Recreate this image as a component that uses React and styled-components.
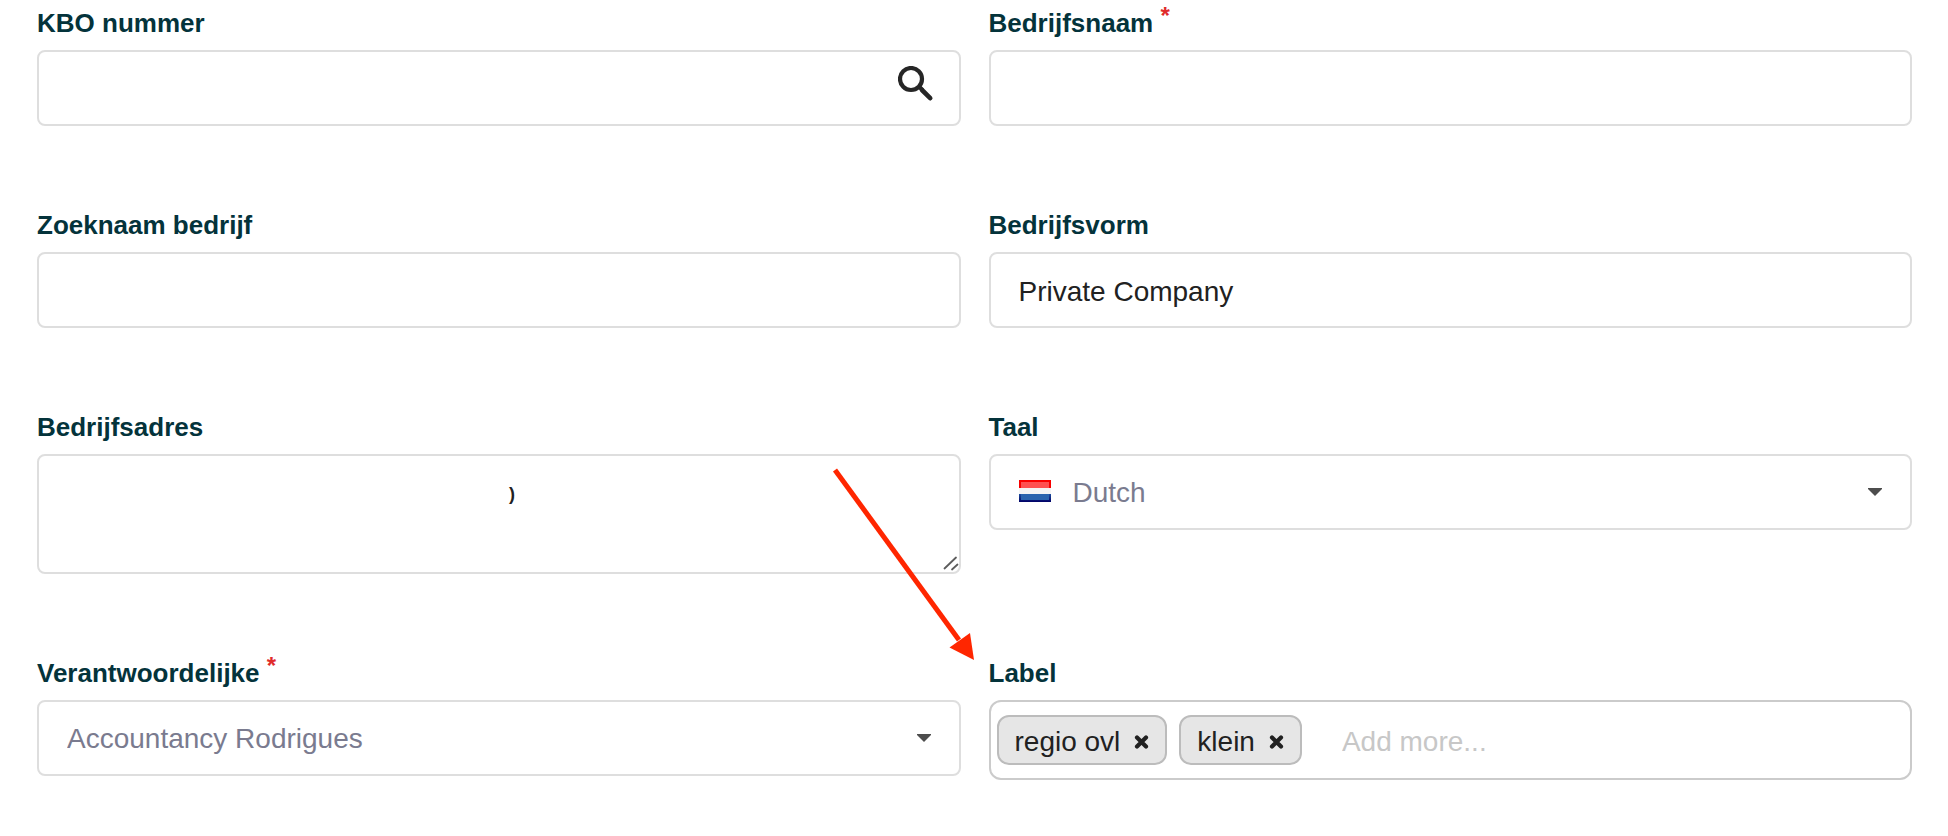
import React, { useState } from 'react'
import styled, { createGlobalStyle } from 'styled-components'

const GlobalStyle = createGlobalStyle`
  * {
    box-sizing: border-box;
  }
  body {
    margin: 0;
    background: #fff;
    color: #212121;
    font-family: "Liberation Sans", Arial, sans-serif;
  }
`;
const Form = styled.form`
  display: grid;
  grid-template-columns: 1fr 1fr;
  align-items: start;
  gap: 84px 28px;
  padding: 8px 36px 56px 37px;
`;
const Field = styled.div`
  position: relative;
  display: flex;
  flex-direction: column;
  gap: 12px;
`;
const Label = styled.label`
  font-size: 26px;
  font-weight: 700;
  line-height: 30px;
  color: #04333b;
`;
const Required = styled.sup`
  font-size: 24px;
  line-height: 0;
  vertical-align: 8px;
  color: #e02b2b;
`;
const Control = styled.div`
  position: relative;
  display: flex;
  align-items: center;
  min-height: 76px;
  border: 2px solid #dedede;
  border-radius: 8px;
  background: #fff;
`;
const Input = styled.input`
  flex: 1;
  min-width: 0;
  height: 72px;
  padding: 4px 28px 0;
  border: none;
  outline: none;
  background: transparent;
  font: 28px "Liberation Sans", Arial, sans-serif;
  color: #212121;
`;
const SearchButton = styled.button`
  display: flex;
  margin: 0 25px 8px 0;
  padding: 0;
  border: none;
  background: none;
  color: #262626;
  cursor: pointer;
`;
const TextArea = styled.textarea`
  display: block;
  width: 100%;
  height: 116px;
  padding: 28px 28px 0;
  border: none;
  outline: none;
  resize: none;
  background: transparent;
  font: bold 18px "Liberation Sans", Arial, sans-serif;
  color: #212121;
  text-indent: 442px;
`;
const Grip = styled.svg`
  position: absolute;
  right: 0;
  bottom: 0;
  pointer-events: none;
`;
const Select = styled.select`
  flex: 1;
  min-width: 0;
  height: 72px;
  padding: 0 60px 0 ${(props) => (props.$withFlag ? '22px' : '28px')};
  border: none;
  outline: none;
  appearance: none;
  background: transparent;
  font: 28px "Liberation Sans", Arial, sans-serif;
  color: #7a7b8f;
`;
const Caret = styled.svg`
  position: absolute;
  right: 27px;
  pointer-events: none;
`;
const Flag = styled.svg`
  flex: none;
  margin: 0 0 2px 28px;
`;
const TagBox = styled(Control)`
  gap: 12px;
  min-height: 80px;
  padding: 0 6px;
  border-color: #cbcbcb;
  border-radius: 12px;
`;
const Tag = styled.span`
  display: flex;
  align-items: center;
  gap: 14px;
  height: 50px;
  padding: 3px 16px 0;
  border: 2px solid #bcbcbc;
  border-radius: 12px;
  background: #e6e6e6;
  font-size: 28px;
  line-height: 32px;
`;
const RemoveButton = styled.button`
  display: flex;
  padding: 0;
  border: none;
  background: none;
  color: #212121;
  cursor: pointer;
`;
const TagInput = styled(Input)`
  &::placeholder {
    color: #c7c7c7;
    opacity: 1;
  }
`;
const Arrow = styled.svg`
  position: absolute;
  top: -192px;
  right: calc(100% + 14px);
  pointer-events: none;
`;

const SearchIcon = () => (
  <svg width="36" height="36" viewBox="0 0 36 36" fill="none" stroke="currentColor" aria-hidden="true">
    <circle cx="13" cy="13" r="11" strokeWidth="4.200" />
    <path d="M21 20.500L24.500 24" strokeWidth="4" />
    <path d="M24 24L32.200 32.200" strokeWidth="4.600" strokeLinecap="round" />
  </svg>
)

const CaretIcon = () => (
  <Caret width="16" height="8" viewBox="0 0 16 8" aria-hidden="true">
    <path d="M1 0H15V1L8 8L1 1Z" fill="#4d4d4d" />
  </Caret>
)

const DutchFlag = () => (
  <Flag width="32" height="22" viewBox="0 0 32 22" aria-hidden="true">
    <defs>
      <linearGradient id="flag-edge" x1="0" y1="0" x2="0" y2="1">
        <stop offset="0" stopColor="#1c4f9f" />
        <stop offset="1" stopColor="#000066" />
      </linearGradient>
    </defs>
    <rect width="32" height="8" fill="#f80000" />
    <rect x="2" y="2" width="28" height="6" fill="#ff5050" />
    <rect y="8" width="32" height="6" fill="#f4f4f4" />
    <rect y="14" width="32" height="8" fill="url(#flag-edge)" />
    <rect x="2" y="14" width="28" height="6" fill="#2a64ae" />
  </Flag>
)

const App = () => {
  const [tags, setTags] = useState(['regio ovl', 'klein'])

  return (
    <>
    <GlobalStyle/>
    <Form>
      <Field>
        <Label htmlFor="kbo">KBO nummer</Label>
        <Control>
          <Input id="kbo" />
          <SearchButton type="button" aria-label="Zoeken">
            <SearchIcon />
          </SearchButton>
        </Control>
      </Field>
      <Field>
        <Label htmlFor="naam">Bedrijfsnaam <Required>*</Required></Label>
        <Control>
          <Input id="naam" />
        </Control>
      </Field>
      <Field>
        <Label htmlFor="zoeknaam">Zoeknaam bedrijf</Label>
        <Control>
          <Input id="zoeknaam" />
        </Control>
      </Field>
      <Field>
        <Label htmlFor="vorm">Bedrijfsvorm</Label>
        <Control>
          <Input id="vorm" defaultValue="Private Company" />
        </Control>
      </Field>
      <Field>
        <Label htmlFor="adres">Bedrijfsadres</Label>
        <Control>
          <TextArea id="adres" defaultValue=")" />
          <Grip width="18" height="18" viewBox="0 0 18 18" aria-hidden="true">
            <path d="M3.500 14.500L15 3.500M11 15.500L16.500 10.500" stroke="#5c5c5c" strokeWidth="1.800" strokeLinecap="round" />
          </Grip>
        </Control>
      </Field>
      <Field>
        <Label htmlFor="taal">Taal</Label>
        <Control>
          <DutchFlag />
          <Select id="taal" $withFlag>
            <option>Dutch</option>
          </Select>
          <CaretIcon />
        </Control>
      </Field>
      <Field>
        <Label htmlFor="verantwoordelijke">Verantwoordelijke <Required>*</Required></Label>
        <Control>
          <Select id="verantwoordelijke">
            <option>Accountancy Rodrigues</option>
          </Select>
          <CaretIcon />
        </Control>
      </Field>
      <Field>
        <Label htmlFor="label">Label</Label>
        <TagBox>
          {tags.map((tag) => (
            <Tag key={tag}>
              {tag}
              <RemoveButton
                type="button"
                aria-label={`Verwijder ${tag}`}
                onClick={() => setTags(tags.filter((t) => t !== tag))}
              >
                <svg width="15" height="14" viewBox="0 0 15 14">
                  <path d="M3 2.500L12 11.500M12 2.500L3 11.500" stroke="currentColor" strokeWidth="4.200" strokeLinecap="round" />
                </svg>
              </RemoveButton>
            </Tag>
          ))}
          <TagInput id="label" placeholder="Add more..." />
        </TagBox>
        <Arrow width="144" height="196" viewBox="0 0 144 196" aria-hidden="true">
          <path d="M4 4L128 174" stroke="#ff2600" strokeWidth="5" />
          <path d="M143 194L118.500 181.500L139 167Z" fill="#ff2600" />
        </Arrow>
      </Field>
    </Form>
    </>
  )
}

export default App
